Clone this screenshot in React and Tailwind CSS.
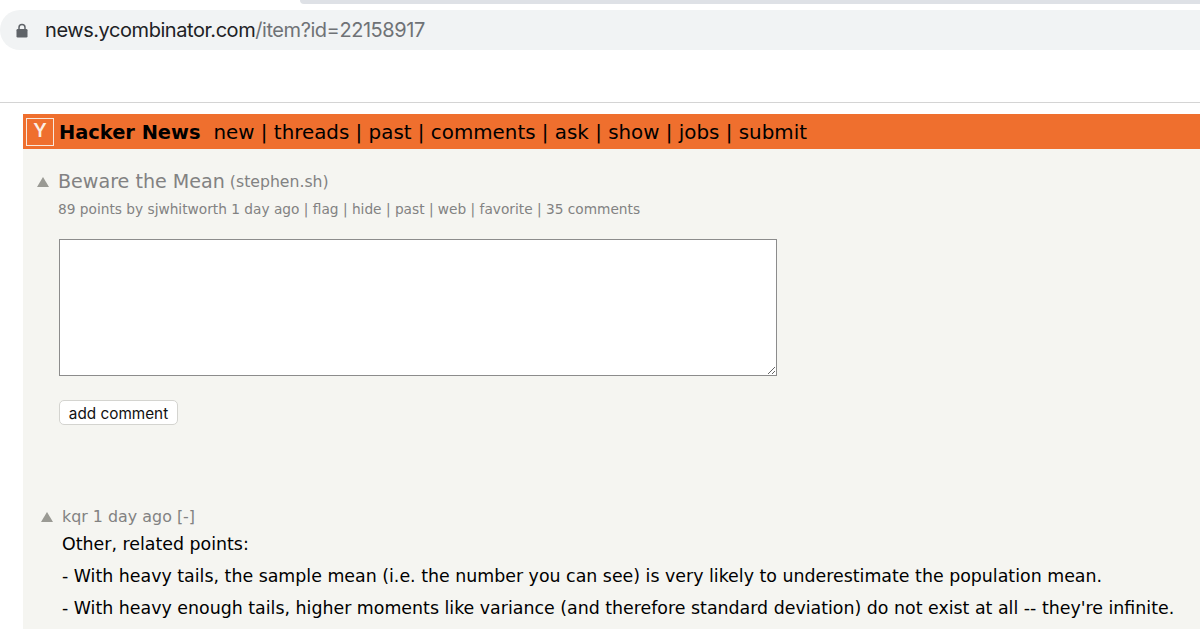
import React from "react";

const navLinks = ["new", "threads", "past", "comments", "ask", "show", "jobs", "submit"];
const verdana = { fontFamily: '"DejaVu Sans", Verdana, sans-serif' };

const UpArrow = ({ className }) => (
  <svg viewBox="0 0 12 10" className={className}>
    <path d="M6 0 L12 10 L0 10 Z" fill="#9a9a94" />
  </svg>
);

const App = () => {
  return (
    <div className="w-[1200px] h-[629px] overflow-hidden bg-white">
      {/* Browser chrome */}
      <div className="h-[4px] ml-[300px] bg-[#dee1e6] rounded-bl-lg" />
      <div className="mt-[6px] h-[40px] rounded-l-[20px] bg-[#f1f3f4] flex items-center pl-[16px] font-['Inter',sans-serif] text-[20px] tracking-[-0.44px]">
        <svg viewBox="0 0 12 14" className="w-[12px] h-[15px] mr-[17px]">
          <path d="M3 6V4a3 3 0 0 1 6 0v2" fill="none" stroke="#5f6368" strokeWidth="1.5" />
          <rect x="0.5" y="5.5" width="11" height="8.5" rx="1.2" fill="#5f6368" />
        </svg>
        <span className="text-[#202124]">news.ycombinator.com</span>
        <span className="text-[#6f7276]">/item?id=22158917</span>
      </div>
      <div className="mt-[52px] h-[1px] bg-[#d4d4d4]" />

      {/* Hacker News page */}
      <div className="mt-[11px] ml-[23px] h-[600px] bg-[#f5f5f1]" style={verdana}>
        <div className="h-[35px] bg-[#ef6f2e] flex items-center pl-[3px] text-black">
          <div className="w-[28px] h-[28px] border border-[#f8e8dc] text-[#fbeee4] flex items-center justify-center text-[19px] font-['Inter',sans-serif] font-semibold">Y</div>
          <span className="ml-[5px] pt-[2px] font-bold text-[19.4px]">Hacker News</span>
          <span className="ml-[13px] pt-[2px] text-[19.87px]">{navLinks.join(" | ")}</span>
        </div>

        <div className="pl-[14px] pt-[21px] flex items-center text-[#828282]">
          <UpArrow className="w-[12px] h-[10px] mr-[9px]" />
          <span className="text-[19.1px] leading-[24px]">Beware the Mean</span>
          <span className="ml-[5px] text-[15.7px] leading-[24px]">(stephen.sh)</span>
        </div>
        <div className="pl-[35px] mt-[5px] text-[13.72px] leading-[20px] text-[#828282]">
          89 points by sjwhitworth 1 day ago | flag | hide | past | web | favorite | 35 comments
        </div>

        <div className="pl-[36px] mt-[20px]">
          <textarea
            readOnly
            className="block w-[718px] h-[137px] bg-white border border-[#8c8c8c] outline-none resize-y"
          />
          <button className="mt-[24px] block w-[119px] h-[25px] pt-[2px] bg-white border border-[#d4d4d0] rounded-[5px] text-[15.3px] text-[#111] font-['Inter',sans-serif]">
            add comment
          </button>
        </div>

        <div className="pl-[18px] mt-[80px] flex items-center text-[#828282] text-[15.9px] leading-[24px]">
          <UpArrow className="w-[12px] h-[10px] mr-[9px]" />
          <span>kqr 1 day ago [-]</span>
        </div>
        <div className="pl-[39px] text-[17.4px] text-black leading-[32px] -mt-[1px] whitespace-nowrap">
          <p>Other, related points:</p>
          <p>- With heavy tails, the sample mean (i.e. the number you can see) is very likely to underestimate the population mean.</p>
          <p>- With heavy enough tails, higher moments like variance (and therefore standard deviation) do not exist at all -- they're infinite.</p>
        </div>
      </div>
    </div>
  );
};

export default App;
